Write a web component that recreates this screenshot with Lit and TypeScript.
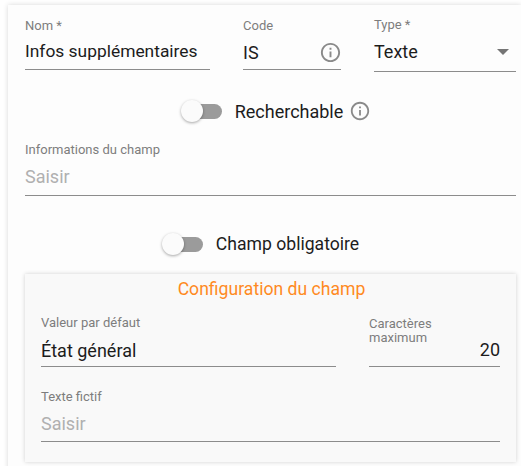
import { LitElement, html, css } from "lit";
import { customElement } from "lit/decorators.js";

const info = (cls: string) => html`<svg class=${cls} viewBox="0 0 24 24" fill="#8a8a8a"><path d="M11 7h2v2h-2zm0 4h2v6h-2zm1-9C6.48 2 2 6.48 2 12s4.48 10 10 10 10-4.48 10-10S17.52 2 12 2zm0 18c-4.41 0-8-3.59-8-8s3.59-8 8-8 8 3.59 8 8-3.59 8-8 8z"/></svg>`;

@customElement("app-root")
export class AppRoot extends LitElement {
  static styles = css`
    :host { display: block; width: 521px; height: 466px; overflow: hidden; background: #fff; font-family: Roboto, "Liberation Sans", sans-serif; color: #1c1c1c; }
    .card { margin: 5px 0 0 8px; width: 513px; height: 470px; box-sizing: border-box; padding: 0 5px 0 17px; background: #fdfdfd; box-shadow: 0 0 5px rgba(0,0,0,.16); }
    .row { display: flex; }
    .top { height: 67px; }
    .field { display: flex; flex-direction: column; box-sizing: border-box; border-bottom: 1px solid #8c8c8c; }
    .lbl { font-size: 13px; line-height: 15px; color: #7d7d7d; }
    .val { font-size: 18px; line-height: 21px; color: #1c1c1c; }
    .ph { color: #b0b0b0; }
    .nom { width: 185px; height: 65px; padding-top: 13px; margin-right: 33px; }
    .nom .val { font-size: 17.4px; }
    .nom .val, .code .val { margin-top: 8px; }
    .code { width: 98px; height: 65px; padding-top: 13px; margin-right: 33px; }
    .code .line { display: flex; justify-content: space-between; align-items: center; }
    .code svg { width: 23px; height: 23px; margin-top: 8px; margin-right: -1px; }
    .type { width: 142px; height: 67px; padding-top: 12px; }
    .type .lbl { line-height: 16px; }
    .type .val { margin-top: 8px; display: flex; justify-content: space-between; align-items: center; }
    .arrow { width: 0; height: 0; border-left: 6px solid transparent; border-right: 6px solid transparent; border-top: 6px solid #757575; margin-right: 7px; }
    .toggle-row { display: flex; justify-content: center; align-items: center; }
    .r1 { height: 32px; margin: 23px 0 0; padding-left: 11px; }
    .track { position: relative; width: 30px; height: 15px; border-radius: 8px; background: #9b9b9b; margin-left: 11px; margin-right: 13px; }
    .track::before { content: ""; position: absolute; left: -11px; top: -4px; width: 22px; height: 22px; border-radius: 50%; background: #fbfbfb; box-shadow: 0 1px 3px rgba(0,0,0,.35); }
    .tlabel { font-size: 18px; line-height: 21px; color: #1c1c1c; }
    .r1 svg { width: 22px; height: 22px; margin-left: 6px; margin-top: -1px; }
    .infos { height: 58px; margin-top: 11px; padding-top: 4px; width: 491px; }
    .infos .val { margin-top: 9px; }
    .r2 { height: 24px; margin-top: 36px; padding-right: 20px; }
    .r2 .tlabel { font-size: 17.6px; }
    .inner { margin-top: 18px; width: 491px; height: 188px; box-sizing: border-box; padding: 5px 16px 0; background: #f9f9f9; box-shadow: 0 0 4px rgba(0,0,0,.18); }
    .title { text-align: center; font-size: 17.6px; line-height: 21px; color: #ff8a1f; padding-left: 2px; }
    .irow { height: 62px; margin-top: 5px; justify-content: space-between; }
    .def { width: 295px; height: 62px; padding-top: 10px; }
    .def .val { margin-top: 10px; }
    .max { width: 131px; height: 62px; padding-top: 12px; }
    .max .lbl { line-height: 14px; }
    .max .val { text-align: right; margin-top: -6px; }
    .fict { margin-top: 12px; height: 63px; padding-top: 10px; }
    .fict .val { margin-top: 9px; }
  `;

  render() {
    return html`
      <div class="card">
        <div class="row top">
          <div class="field nom"><span class="lbl">Nom *</span><span class="val">Infos supplémentaires</span></div>
          <div class="field code"><span class="lbl">Code</span><div class="line"><span class="val">IS</span>${info("")}</div></div>
          <div class="field type"><span class="lbl">Type *</span><span class="val">Texte<i class="arrow"></i></span></div>
        </div>
        <div class="toggle-row r1"><span class="track"></span><span class="tlabel">Recherchable</span>${info("")}</div>
        <div class="field infos"><span class="lbl">Informations du champ</span><span class="val ph">Saisir</span></div>
        <div class="toggle-row r2"><span class="track"></span><span class="tlabel">Champ obligatoire</span></div>
        <div class="inner">
          <div class="title">Configuration du champ</div>
          <div class="row irow">
            <div class="field def"><span class="lbl">Valeur par défaut</span><span class="val">État général</span></div>
            <div class="field max"><span class="lbl">Caractères<br />maximum</span><span class="val">20</span></div>
          </div>
          <div class="field fict"><span class="lbl">Texte fictif</span><span class="val ph">Saisir</span></div>
        </div>
      </div>
    `;
  }
}
